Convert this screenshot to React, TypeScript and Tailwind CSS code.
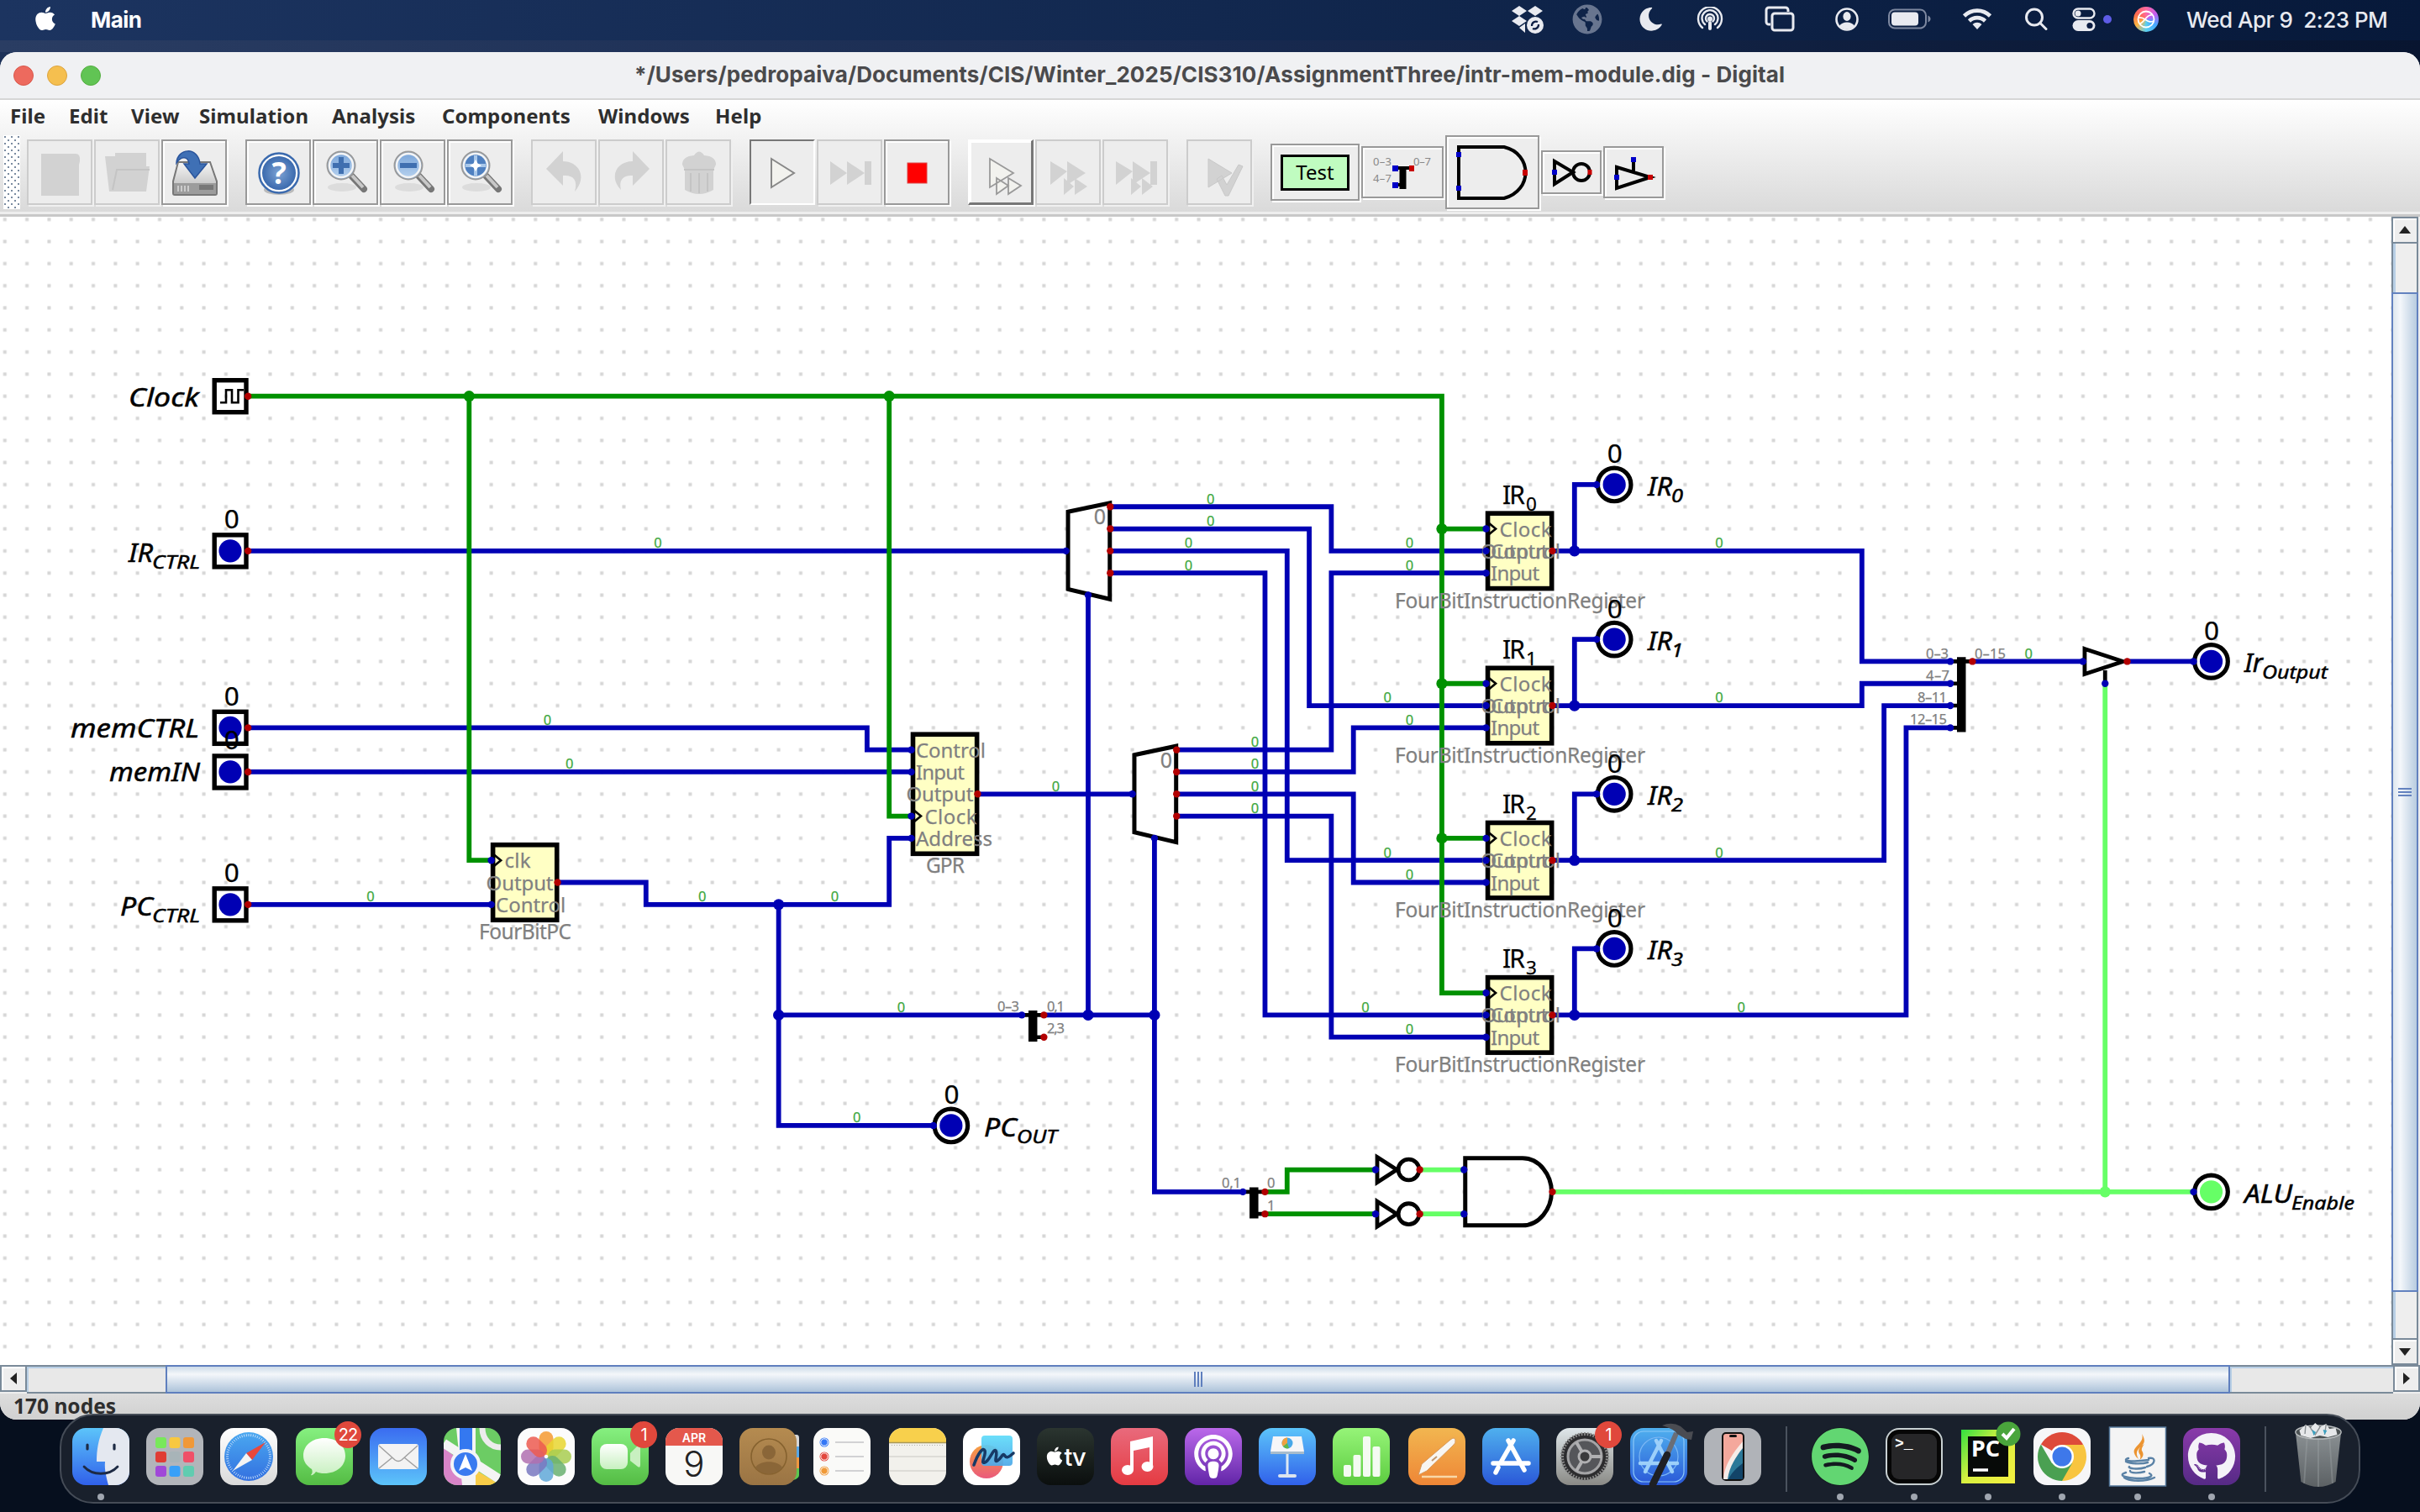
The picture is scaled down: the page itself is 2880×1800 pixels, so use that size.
import React from 'react';
import { FaApple, FaGithub, FaSpotify, FaMoon, FaGlobeAmericas, FaPodcast } from 'react-icons/fa';

/* ------------------------------------------------------------------ */
/* Circuit geometry: positions are grid cells, origin = clock out pin  */
/* ------------------------------------------------------------------ */
const G = 26.31;
const X = (n: number) => 295.2 + n * G;
const Y = (m: number) => 471.7 - 258 + m * G;

const BLUE = '#0000b4';
const GREEN = '#009100';
const LIGHT = '#66ff66';
const RED = '#b20000';

type Pts = number[][];
const path = (p: Pts) => p.map(([a, b], i) => `${i ? 'L' : 'M'}${X(a)} ${Y(b)}`).join('');

const blueWires: Pts[] = [
  [[0, 7], [37, 7]],
  [[0, 15], [28, 15], [28, 16], [30, 16]],
  [[0, 17], [30, 17]],
  [[33, 18], [40, 18]],
  [[30, 20], [29, 20], [29, 23], [18, 23], [18, 22], [14, 22]],
  [[0, 23], [11, 23]],
  [[24, 23], [24, 33], [31, 33]],
  [[24, 28], [35, 28]],
  [[36, 28], [41, 28]],
  [[38, 9], [38, 28]],
  [[41, 20], [41, 36], [45, 36]],
  [[39, 5], [49, 5], [49, 7], [56, 7]],
  [[39, 6], [48, 6], [48, 14], [56, 14]],
  [[39, 7], [47, 7], [47, 21], [56, 21]],
  [[39, 8], [46, 8], [46, 28], [56, 28]],
  [[42, 16], [49, 16], [49, 8], [56, 8]],
  [[42, 17], [50, 17], [50, 15], [56, 15]],
  [[42, 18], [50, 18], [50, 22], [56, 22]],
  [[42, 19], [49, 19], [49, 29], [56, 29]],
  [[59, 7], [73, 7], [73, 12], [77, 12]],
  [[59, 14], [73, 14], [73, 13], [77, 13]],
  [[59, 21], [74, 21], [74, 14], [77, 14]],
  [[59, 28], [75, 28], [75, 15], [77, 15]],
  [[60, 7], [60, 4], [61, 4]],
  [[60, 14], [60, 11], [61, 11]],
  [[60, 21], [60, 18], [61, 18]],
  [[60, 28], [60, 25], [61, 25]],
  [[78, 12], [83, 12]],
  [[85, 12], [88, 12]],
];
const greenWires: Pts[] = [
  [[0, 0], [54, 0], [54, 27], [56, 27]],
  [[10, 0], [10, 21], [11, 21]],
  [[29, 0], [29, 19], [30, 19]],
  [[54, 6], [56, 6]],
  [[54, 13], [56, 13]],
  [[54, 20], [56, 20]],
  [[46, 36], [47, 36], [47, 35], [51, 35]],
  [[46, 37], [51, 37]],
];
const lightWires: Pts[] = [
  [[53, 35], [55, 35]],
  [[53, 37], [55, 37]],
  [[59, 36], [88, 36]],
  [[84, 36], [84, 13]],
];
const wireValues: Pts = [
  [18.5, 7], [13.5, 15], [14.5, 17], [5.5, 23], [20.5, 23], [26.5, 23], [29.5, 28], [27.5, 33], [36.5, 18],
  [43.5, 5], [43.5, 6], [42.5, 7], [42.5, 8], [45.5, 16], [45.5, 17], [45.5, 18], [45.5, 19],
  [52.5, 7], [52.5, 8], [51.5, 14], [52.5, 15], [51.5, 21], [52.5, 22], [50.5, 28], [52.5, 29],
  [66.5, 7], [66.5, 14], [66.5, 21], [67.5, 28], [80.5, 12],
];
const blueJunctions: Pts = [[24, 23], [24, 28], [38, 28], [41, 28], [60, 7], [60, 14], [60, 21], [60, 28]];
const greenJunctions: Pts = [[10, 0], [29, 0], [54, 6], [54, 13], [54, 20]];

function T({ x, y, s, w, anchor = 'start', italic = false, fill = '#000', children }: {
  x: number; y: number; s: number; w?: number; anchor?: 'start' | 'middle' | 'end'; italic?: boolean; fill?: string; children: React.ReactNode;
}) {
  return (
    <text
      x={x} y={y} fontSize={s} textLength={w} lengthAdjust={italic ? 'spacingAndGlyphs' : 'spacing'} textAnchor={anchor}
      fontStyle={italic ? 'italic' : 'normal'} fill={fill} stroke={fill} strokeWidth={italic ? 0.5 : 0.25}
    >
      {children}
    </text>
  );
}

const Pin = ({ n, m, c = BLUE, r = 4.2 }: { n: number; m: number; c?: string; r?: number }) => (
  <circle cx={X(n)} cy={Y(m)} r={r} fill={c} />
);

function Sub({ x, y, main, sub, w1, x2, w2, italic = true }: {
  x: number; y: number; main: string; sub: string; w1: number; x2: number; w2: number; italic?: boolean;
}) {
  return (
    <>
      <T x={x} y={y} s={30} w={w1} italic={italic}>{main}</T>
      <T x={x2} y={y + 8} s={22.5} w={w2} italic={italic}>{sub}</T>
    </>
  );
}

function InputPort({ m, clock = false }: { m: number; clock?: boolean }) {
  const y = Y(m);
  return (
    <>
      <rect x={255.2} y={y - 19} width={37.8} height={38} fill="none" stroke="#000" strokeWidth={5.4} />
      {clock ? (
        <path d={`M262 ${y + 7.5}H269V${y - 7.5}H276V${y + 7.5}H283.5V${y - 7.5}H290`} fill="none" stroke="#000" strokeWidth={2.6} />
      ) : (
        <>
          <circle cx={274} cy={y} r={13.6} fill={BLUE} />
          <T x={275.8} y={y - 26.5} s={31.5} anchor="middle">0</T>
        </>
      )}
      <Pin n={0} m={m} c={RED} />
    </>
  );
}

function OutputPort({ n, m, on = false }: { n: number; m: number; on?: boolean }) {
  const x = X(n + 0.8);
  return (
    <>
      <circle cx={x} cy={Y(m)} r={19.8} fill="#fff" stroke="#000" strokeWidth={5.2} />
      <circle cx={x} cy={Y(m)} r={13.6} fill={on ? LIGHT : BLUE} />
      {!on && <T x={x + 0.6} y={Y(m) - 25.5} s={31.5} anchor="middle">0</T>}
      <Pin n={n} m={m} />
    </>
  );
}

type Row = { t: string; m: number; kind: 'in' | 'out' | 'clk'; w: number };
function Block({ n, rows, name, nameW }: { n: number; rows: Row[]; name: string; nameW: number }) {
  const m0 = Math.min(...rows.map((r) => r.m));
  const m1 = Math.max(...rows.map((r) => r.m));
  return (
    <>
      <rect x={X(n) + 2} y={Y(m0 - 0.7)} width={3 * G - 2.8} height={Y(m1 + 0.7) - Y(m0 - 0.7)} fill="#ffffc4" stroke="#000" strokeWidth={5.6} />
      <T x={X(n + 1.5) + 1} y={Y(m1) + 41.5} s={24.5} w={nameW} anchor="middle" fill="#808080">{name}</T>
      {rows.map((r) => {
        const y = Y(r.m) + 9;
        if (r.kind === 'out')
          return (
            <g key={r.t}>
              <T x={X(n + 3) - 5} y={y} s={24} w={r.w} anchor="end" fill="#808080">{r.t}</T>
            </g>
          );
        return (
          <g key={r.t}>
            {r.kind === 'clk' && <path d={`M${X(n) + 3} ${Y(r.m) - 7}l8.5 7l-8.5 7`} fill="none" stroke="#000" strokeWidth={2.6} />}
            <T x={X(n) + (r.kind === 'clk' ? 16 : 5.5)} y={y} s={24} w={r.w} fill="#808080">{r.t}</T>
          </g>
        );
      })}
      {rows.map((r) => (
        <Pin key={r.t + 'p'} n={r.kind === 'out' ? n + 3 : n} m={r.m} c={r.kind === 'out' ? RED : BLUE} />
      ))}
    </>
  );
}

function Demux({ n, m }: { n: number; m: number }) {
  return (
    <>
      <path
        d={`M${X(n + 0.09)} ${Y(m + 0.23)}L${X(n + 1.98)} ${Y(m - 0.17)}V${Y(m + 4.18)}L${X(n + 0.09)} ${Y(m + 3.73)}Z`}
        fill="none" stroke="#000" strokeWidth={5}
      />
      <T x={X(n + 1.5) + 0.8} y={Y(m) + 21} s={25} anchor="middle" fill="#808080">0</T>
      {[0, 1, 2, 3].map((i) => <Pin key={i} n={n + 2} m={m + i} c={RED} />)}
      <Pin n={n} m={m + 2} />
      <Pin n={n + 1} m={m + 4} />
    </>
  );
}

function Inverter({ m }: { m: number }) {
  const y = Y(m);
  return (
    <>
      <path d={`M${X(51) + 2} ${y - 15}L${X(52) - 1} ${y}L${X(51) + 2} ${y + 15}Z`} fill="none" stroke="#000" strokeWidth={4.8} />
      <circle cx={X(52.5)} cy={y} r={12.4} fill="none" stroke="#000" strokeWidth={4.8} />
      <Pin n={51} m={m} />
      <Pin n={53} m={m} c={RED} />
    </>
  );
}

function Circuit() {
  const S = (x: number, y: number, w: number | undefined, t: string, end = false) => (
    <T x={x} y={y - 258} s={16.5} w={w} anchor={end ? 'end' : 'start'} fill="#808080">{t}</T>
  );
  return (
    <svg className="block h-full w-full" viewBox="0 0 2846 1367" preserveAspectRatio="xMinYMin slice" style={{ fontFamily: '"Noto Sans", "Open Sans", sans-serif' }}>
      <defs>
        <pattern id="dots" x={X(0) - G / 2} y={Y(0) - G / 2} width={G} height={G} patternUnits="userSpaceOnUse">
          <rect x={G / 2 - 2} y={G / 2 - 2} width={4} height={4} fill="#d6d6d6" />
        </pattern>
      </defs>
      <rect width={2846} height={1358} fill="url(#dots)" />
      <g fill="none" strokeWidth={5.8} strokeLinecap="square">
        {blueWires.map((w, i) => <path key={i} d={path(w)} stroke={BLUE} />)}
        {greenWires.map((w, i) => <path key={i} d={path(w)} stroke={GREEN} />)}
        {lightWires.map((w, i) => <path key={i} d={path(w)} stroke={LIGHT} />)}
      </g>
      {blueJunctions.map(([a, b]) => <Pin key={`${a}-${b}`} n={a} m={b} r={6.6} />)}
      {greenJunctions.map(([a, b]) => <Pin key={`${a}-${b}`} n={a} m={b} c={GREEN} r={6.6} />)}
      <Pin n={84} m={36} c={LIGHT} r={6.6} />
      {wireValues.map(([a, b]) => (
        <T key={`${a}-${b}`} x={X(a + 0.04)} y={Y(b) - 3.6} s={16.5} anchor="middle" fill="#40a840">0</T>
      ))}

      <T x={153} y={Y(0) + 12} s={30} w={84} italic>Clock</T>
      <Sub x={153} y={Y(7) + 12.8} main="IR" w1={29} sub="CTRL" x2={181} w2={57} />
      <T x={84} y={Y(15) + 11.5} s={30} w={153} italic>memCTRL</T>
      <T x={130} y={Y(17) + 11.5} s={30} w={108} italic>memIN</T>
      <Sub x={143} y={Y(23) + 12.8} main="PC" w1={39} sub="CTRL" x2={181} w2={57} />
      <InputPort m={0} clock />
      <InputPort m={7} />
      <InputPort m={15} />
      <InputPort m={17} />
      <InputPort m={23} />

      <Block n={11} name="FourBitPC" nameW={110} rows={[
        { t: 'clk', m: 21, kind: 'clk', w: 31 },
        { t: 'Output', m: 22, kind: 'out', w: 80 },
        { t: 'Control', m: 23, kind: 'in', w: 83 },
      ]} />
      <Block n={30} name="GPR" nameW={46} rows={[
        { t: 'Control', m: 16, kind: 'in', w: 83 },
        { t: 'Input', m: 17, kind: 'in', w: 58 },
        { t: 'Output', m: 18, kind: 'out', w: 80 },
        { t: 'Clock', m: 19, kind: 'clk', w: 62 },
        { t: 'Address', m: 20, kind: 'in', w: 91 },
      ]} />
      {[0, 1, 2, 3].map((i) => (
        <g key={i}>
          <Sub x={1788} y={Y(6 + 7 * i) - 30} main="IR" w1={27} sub={String(i)} x2={1816} w2={13} italic={false} />
          <Block n={56} name="FourBitInstructionRegister" nameW={298} rows={[
            { t: 'Clock', m: 6 + 7 * i, kind: 'clk', w: 62 },
            { t: 'Control', m: 7 + 7 * i, kind: 'in', w: 83 },
            { t: 'Output', m: 7 + 7 * i, kind: 'out', w: 80 },
            { t: 'Input', m: 8 + 7 * i, kind: 'in', w: 58 },
          ]} />
          <OutputPort n={61} m={4 + 7 * i} />
          <Sub x={1961} y={Y(4 + 7 * i) + 13} main="IR" w1={29} sub={String(i)} x2={1989} w2={14} />
        </g>
      ))}

      <Demux n={37} m={5} />
      <Demux n={40} m={16} />

      <OutputPort n={31} m={33} />
      <Sub x={1171} y={Y(33) + 13} main="PC" w1={39} sub="OUT" x2={1210} w2={48} />
      <OutputPort n={88} m={12} />
      <Sub x={2671} y={Y(12) + 13} main="Ir" w1={22} sub="Output" x2={2692} w2={78} />
      <OutputPort n={88} m={36} on />
      <Sub x={2671} y={Y(36) + 13} main="ALU" w1={57} sub="Enable" x2={2727} w2={75} />

      <g stroke="#000" strokeWidth={4.6}>
        <path d={`M${X(35)} ${Y(28)}H${X(36)}M${X(35.5)} ${Y(29)}H${X(36)}`} />
        <path d={`M${X(45)} ${Y(36)}H${X(46)}M${X(45.5)} ${Y(37)}H${X(46)}`} />
        <path d={`M${X(77)} ${Y(12)}H${X(78)}M${X(77)} ${Y(13)}H${X(77.5)}M${X(77)} ${Y(14)}H${X(77.5)}M${X(77)} ${Y(15)}H${X(77.5)}`} />
        <path strokeWidth={10.5} d={`M${X(35.5)} ${Y(27.8)}V${Y(29.2)}M${X(45.5)} ${Y(35.8)}V${Y(37.2)}M${X(77.5)} ${Y(11.8)}V${Y(15.2)}`} />
      </g>
      {S(1213, 1203.5, 26, '0–3', true)}
      {S(1246, 1203.5, 21, '0,1')}
      {S(1246, 1229.5, 21, '2,3')}
      {S(1477, 1414, 23, '0,1', true)}
      {S(1508, 1414, undefined, '0')}
      {S(1508, 1441, undefined, '1')}
      {S(2319, 784, 27, '0–3', true)}
      {S(2320, 810, 28, '4–7', true)}
      {S(2317, 836, 35, '8–11', true)}
      {S(2317, 862, 44, '12–15', true)}
      {S(2350, 784, 37, '0–15')}
      <Pin n={35} m={28} /><Pin n={36} m={28} c={RED} /><Pin n={36} m={29} c={RED} />
      <Pin n={45} m={36} /><Pin n={46} m={36} c={RED} /><Pin n={46} m={37} c={RED} />
      {[12, 13, 14, 15].map((m) => <Pin key={m} n={77} m={m} />)}
      <Pin n={78} m={12} c={RED} />

      <Inverter m={35} />
      <Inverter m={37} />
      <path d={`M${X(55) + 1.5} ${Y(36) - 40}H${X(57.65)}C${X(57.65) + 20} ${Y(36) - 40} ${X(59) - 1} ${Y(36) - 20} ${X(59) - 1} ${Y(36)}S${X(57.65) + 20} ${Y(36) + 40} ${X(57.65)} ${Y(36) + 40}H${X(55) + 1.5}Z`} fill="none" stroke="#000" strokeWidth={5} />
      <Pin n={55} m={35} /><Pin n={55} m={37} /><Pin n={59} m={36} c={RED} />

      <path d={`M${X(83) + 2} ${Y(12) - 15}L${X(85) - 5} ${Y(12)}L${X(83) + 2} ${Y(12) + 15}ZM${X(84)} ${Y(12.4)}V${Y(13)}`} fill="none" stroke="#000" strokeWidth={4.8} />
      <Pin n={83} m={12} /><Pin n={85} m={12} c={RED} /><Pin n={84} m={13} />
    </svg>
  );
}

/* ------------------------------ menu bar ------------------------------ */
const ico = 'ml-[31px] flex h-10 w-10 items-center justify-center shrink-0';
function MenuBar() {
  const st = { fill: 'none', stroke: '#e8eaf0', strokeWidth: 3 } as const;
  return (
    <header className="flex h-12 items-center bg-linear-to-r from-[#1c3460] via-[#12284f] to-[#07193a] pb-[2px] pl-[38px] text-[#e8eaf0]" style={{ fontFamily: 'Inter, sans-serif' }}>
      <FaApple className="-mt-[3px] h-8 w-8 text-white" />
      <span className="ml-[38px] text-[26px] font-bold tracking-[-0.5px] text-white">Main</span>
      <div className="ml-auto flex items-center">
        <div className={ico}>
          <svg width="38" height="36" viewBox="0 0 38 36" fill="#e8eaf0">
            <path d="M9 2l9 6-9 6-9-6zM28 2l9 6-9 6-9-6zM9 14l9 6-9 6-9-6zM9 28l7-5v11z" />
            <circle cx="28" cy="25" r="10" />
            <path d="M24 26a5 5 0 0 1 7-5M32 24a5 5 0 0 1-7 5" fill="none" stroke="#0b1c42" strokeWidth="2.2" />
          </svg>
        </div>
        <div className={ico}><FaGlobeAmericas className="h-9 w-9 text-[#68758f]" /></div>
        <div className="ml-[35px] flex h-10 w-10 items-center justify-center"><FaMoon className="h-[28px] w-[28px] rotate-[-10deg] text-[#e8eaf0]" /></div>
        <div className={ico}>
          <svg width="32" height="30" viewBox="0 0 32 30" {...st} strokeWidth={2.4} strokeLinecap="round">
            <path d="M7 25A14 14 0 1 1 25 25M10 21A9.500 9.500 0 1 1 22 21M12.500 17.500A5 5 0 1 1 19.500 17.500" />
            <circle cx="16" cy="14.500" r="1.800" fill="#e8eaf0" /><path d="M16 19v7" strokeWidth={4} />
          </svg>
        </div>
        <div className="ml-[43px] flex h-10 w-10 items-center justify-center">
          <svg width="36" height="32" viewBox="0 0 36 32" {...st}>
            <path d="M7 22H5a3 3 0 0 1-3-3V5a3 3 0 0 1 3-3h20a3 3 0 0 1 3 3v2" /><rect x="9" y="9" width="25" height="20" rx="3" />
          </svg>
        </div>
        <div className="ml-10 flex h-10 w-10 items-center justify-center">
          <svg width="30" height="30" viewBox="0 0 30 30" {...st}>
            <circle cx="15" cy="15" r="12.500" strokeWidth={2.6} /><ellipse cx="15" cy="11.500" rx="4.600" ry="5.400" fill="#e8eaf0" stroke="none" /><path d="M6 23c3-6 15-6 18 0-5 5-13 5-18 0z" fill="#e8eaf0" stroke="none" />
          </svg>
        </div>
        <div className="ml-[35px] flex h-10 w-10 items-center justify-center">
          <svg className="shrink-0" width="52" height="26" viewBox="0 0 52 26">
            <rect x="1" y="1.500" width="44" height="22" rx="7" fill="none" stroke="#7d88a0" strokeWidth="2" /><rect x="4" y="4.500" width="32" height="16" rx="4" fill="#e8eaf0" /><path d="M47.500 8.500c4 1.500 4 6.500 0 8z" fill="#7d88a0" />
          </svg>
        </div>
        <div className="ml-10 flex h-10 w-10 items-center justify-center">
          <svg width="36" height="28" viewBox="0 0 36 28" {...st} strokeWidth={4.6}>
            <path d="M2.500 10a22 22 0 0 1 31 0M8.500 16a13.500 13.500 0 0 1 19 0" /><path d="M18 26l-5.500-6a8 8 0 0 1 11 0z" fill="#e8eaf0" stroke="none" />
          </svg>
        </div>
        <div className="ml-[30px] flex h-10 w-10 items-center justify-center">
          <svg width="28" height="28" viewBox="0 0 28 28" {...st} strokeLinecap="round"><circle cx="12" cy="11.500" r="9.500" /><path d="M19 18.500l7 7" /></svg>
        </div>
        <div className="ml-[17px] flex h-10 w-10 items-center justify-center">
          <svg width="28" height="28" viewBox="0 0 28 28">
            <rect x="1.500" y="1.500" width="25" height="11" rx="5.500" fill="none" stroke="#e8eaf0" strokeWidth="2.400" /><circle cx="7" cy="7" r="3.500" fill="#e8eaf0" />
            <rect x="0.500" y="15" width="27" height="13" rx="6.500" fill="#e8eaf0" /><circle cx="21" cy="21.500" r="3.600" fill="#0b1c42" />
          </svg>
        </div>
        <span className="ml-[3px] h-[10px] w-[10px] rounded-full bg-[#5e5ce6]" />
        <div className="ml-[21px] flex h-10 w-10 items-center justify-center">
          <div className="flex h-[30px] w-[30px] items-center justify-center rounded-full bg-[conic-gradient(#ff6aa0,#c45cf0,#46a8ff,#5ad0f0,#ffb340,#ff6a50,#ff6aa0)]">
            <svg width="22" height="22" viewBox="0 0 22 22" fill="none" stroke="#fff" strokeWidth="1.800"><circle cx="11" cy="11" r="9.500" /><path d="M2 9c8-2 10 8 18 4M4 16C8 16 12 4 18 6" /></svg>
          </div>
        </div>
        <span className="ml-[28px] w-[278px] whitespace-pre text-[26px] font-medium tracking-[-0.5px]">Wed Apr 9  2:23 PM</span>
      </div>
    </header>
  );
}

/* ------------------------------ toolbar ------------------------------ */
function Btn({ children, off = false, down = false, cls = 'h-[78px] w-[78px]' }: { children?: React.ReactNode; off?: boolean; down?: boolean; cls?: string }) {
  const look = down
    ? 'border-2 border-t-[#777] border-l-[#777] border-r-white border-b-white'
    : off
      ? 'border-2 border-[#cccccc] shadow-[2px_2px_0_#f0f0f0]'
      : 'border-2 border-[#999] shadow-[2px_2px_0_#fff,inset_2px_2px_0_#fff]';
  return <div className={`mr-[2px] flex shrink-0 items-center justify-center bg-[#ededed] ${cls} ${look}`}>{children}</div>;
}
const I = ({ children }: { children: React.ReactNode }) => <svg className="shrink-0" width="78" height="78" viewBox="0 0 78 78">{children}</svg>;
const Sp = () => <div className="w-5 shrink-0" />;
const Lens = ({ children }: { children: React.ReactNode }) => (
  <I>
    <ellipse cx="35" cy="57" rx="17" ry="5" fill="#dcdcdc" />
    <path d="M46 43L61 59" stroke="#777" strokeWidth="8" strokeLinecap="round" /><path d="M47 43L60 57" stroke="#c8c8c8" strokeWidth="4" />
    <circle cx="34" cy="31" r="16.500" fill="#8fb4e0" stroke="#9a9a9a" strokeWidth="2" /><circle cx="34" cy="31" r="14" fill="url(#lens)" stroke="#f4f4f4" strokeWidth="2.500" />
    {children}
  </I>
);

function Toolbar() {
  const g = '#d2d2d2';
  return (
    <div className="flex h-[92px] items-center pb-[2px] pl-1">
      <svg width="0" height="0" className="absolute">
        <defs>
          <linearGradient id="lens" x1="0" y1="0" x2="0" y2="1"><stop offset="0" stopColor="#7ba6da" /><stop offset="1" stopColor="#b5d0ee" /></linearGradient>
          <linearGradient id="drv" x1="0" y1="0" x2="0" y2="1"><stop offset="0" stopColor="#f6f6f6" /><stop offset="1" stopColor="#b4b4b4" /></linearGradient>
          <radialGradient id="hlp"><stop offset="0" stopColor="#7da3d4" /><stop offset="1" stopColor="#3b6aae" /></radialGradient>
        </defs>
      </svg>
      <div className="mr-2 h-[88px] w-5 shrink-0 bg-[radial-gradient(circle_at_2px_2px,#7a8ba0_1.3px,transparent_1.5px),radial-gradient(circle_at_6px_6px,#7a8ba0_1.3px,transparent_1.5px)] bg-[length:8px_8px] bg-white" />
      <Btn off><I><path d="M17 17H58Q64 17 63 26L62 30V67H17Z" fill={g} /></I></Btn>
      <Btn off><I><path d="M13 20H25V16H62V32H66L62 62H18Z" fill={g} /><path d="M22 60L27 36H66" fill="none" stroke="#c4c4c4" strokeWidth="2" /></I></Btn>
      <Btn><I>
        <path d="M20 27H58L66 50V64Q66 66 64 66H16Q14 66 14 64V50Z" fill="url(#drv)" stroke="#777" strokeWidth="2" /><path d="M15 52H65V65H15Z" fill="#9c9c9c" /><path d="M20 55v7M24 55v7M28 55v7M32 55v7" stroke="#ccc" strokeWidth="2" /><path d="M45 57H62" stroke="#777" strokeWidth="6" />
        <path d="M18 28C19 10 44 8 46 29H54L40 46L27 29H33C32 20 24 19 18 28Z" fill="#3f70b5" stroke="#2a549b" strokeWidth="1.500" />
      </I></Btn>
      <Sp />
      <Btn><I><ellipse cx="40" cy="60" rx="18" ry="6" fill="#bbb" /><circle cx="40" cy="40" r="23.500" fill="#fff" stroke="#3b6aae" strokeWidth="2.500" /><circle cx="40" cy="40" r="20" fill="url(#hlp)" /><text x="40" y="53" textAnchor="middle" fontSize="36" fontWeight="700" fill="#fff" fontFamily="Noto Sans, sans-serif">?</text></I></Btn>
      <Btn><Lens><path d="M34 21V41M24 31H44" stroke="#3f6fb0" strokeWidth="6" /></Lens></Btn>
      <Btn><Lens><path d="M24 31H44" stroke="#3f6fb0" strokeWidth="6" /></Lens></Btn>
      <Btn><Lens><circle cx="34" cy="31" r="12.500" fill="#4f80c0" /><path d="M34 19V43M22 31H46" stroke="#a9c8ea" strokeWidth="4" /><path d="M34 24l2.500 4.500 4.500 2.500-4.500 2.500-2.500 4.500-2.500-4.500-4.500-2.500 4.500-2.500z" fill="#fff" /></Lens></Btn>
      <Sp />
      <Btn off><I><path d="M18 35L38 14V26C56 26 68 44 52 62C56 48 50 42 38 43V55Z" fill={g} /></I></Btn>
      <Btn off><I><path d="M61 35L41 14V26C22 26 12 44 27 60C24 48 30 42 41 43V55Z" fill={g} /></I></Btn>
      <Btn off><I><path d="M20 30Q20 20 34 19Q40 10 46 19Q60 20 60 30L57 36V60Q40 70 23 60V36Z" fill={g} /><path d="M22 36H58M30 40V62M40 40V64M50 40V62" stroke="#c4c4c4" strokeWidth="2" /></I></Btn>
      <Sp />
      <Btn down><I><path d="M26 23L53 40L26 57Z" fill="#f2f2ee" stroke="#888" strokeWidth="2" /></I></Btn>
      <Btn off><I><path d="M16 26L36 40L16 54ZM36 26L57 40L36 54ZM57 26H65V54H57Z" fill={g} /></I></Btn>
      <Btn><I><rect x="28" y="28" width="23" height="24" fill="#f00" stroke="#d44" strokeWidth="1" /></I></Btn>
      <Sp />
      <Btn cls="h-[78px] w-[78px] border-r-[3px]! border-b-[3px]! border-t-white! border-l-white! border-r-[#777]! border-b-[#777]!"><I><path d="M26 23L54 40L26 57ZM34 46L48 55L34 65ZM48 46L63 55L48 65Z" fill="#f2f2ee" stroke="#999" strokeWidth="1.800" /></I></Btn>
      <Btn off><I><path d="M18 26L38 38L18 54ZM38 26L60 40L38 54ZM34 46L46 56L34 66ZM47 46L62 56L47 66Z" fill={g} /></I></Btn>
      <Btn off><I><path d="M16 26L36 38L16 54ZM36 26L57 40L36 54ZM57 26H65V54H57ZM34 46L46 56L34 66ZM47 46L60 56L47 66Z" fill={g} /></I></Btn>
      <Sp />
      <Btn off><I><path d="M26 23L54 40L26 57ZM36 47L42 43L48 54L62 30L67 32L50 67H46Z" fill={g} stroke="#c8c8c8" strokeWidth="1" /></I></Btn>
      <Sp />
      <Btn cls="h-[68px] w-[106px]">
        <div className="flex h-[43px] w-[82px] items-center justify-center border-[3px] border-black bg-[#c0fcc0] text-[24px] text-black">Test</div>
      </Btn>
      <Btn cls="h-[62px] w-[98px]">
        <svg width="94" height="58" viewBox="0 0 94 58" fontSize="13" fill="#888" fontFamily="Noto Sans, sans-serif">
          <text x="12" y="21" textLength="22">0–3</text><text x="60" y="21" textLength="21">0–7</text><text x="12" y="41" textLength="22">4–7</text>
          <path d="M39 24H57M39 44H47" stroke="#000" strokeWidth="4" /><path d="M47.500 22V49" stroke="#000" strokeWidth="8" />
          <path d="M35 21h7v7h-7zM35 41h7v7h-7z" fill="#0000c8" /><path d="M55 21h6v7h-6z" fill="#c80000" />
        </svg>
      </Btn>
      <Btn cls="h-[88px] w-[112px]">
        <svg width="108" height="84" viewBox="0 0 108 84" fill="none" stroke="#000" strokeWidth="4">
          <path d="M14 12H68C102 20 102 64 68 73H14Z" /><path d="M14 18v6M14 58v6" stroke="#0000c8" strokeWidth="6" /><path d="M93 39v7" stroke="#c80000" strokeWidth="6" />
        </svg>
      </Btn>
      <Btn cls="h-[52px] w-[72px]">
        <svg width="68" height="48" viewBox="0 0 68 48" fill="none" stroke="#000" strokeWidth="4">
          <path d="M14 11L36 24L14 38Z" /><circle cx="46" cy="24" r="10" /><path d="M14 21v6" stroke="#0000c8" strokeWidth="6" /><path d="M56 21v6" stroke="#c80000" strokeWidth="5" />
        </svg>
      </Btn>
      <Btn cls="h-[62px] w-[72px]">
        <svg width="68" height="58" viewBox="0 0 68 58" fill="none" stroke="#000" strokeWidth="4">
          <path d="M14 23L54 35L14 48ZM34 15V28" /><path d="M14 32v6M34 11v6" stroke="#0000c8" strokeWidth="6" /><path d="M54 32v6" stroke="#c80000" strokeWidth="6" />
        </svg>
      </Btn>
    </div>
  );
}

/* ------------------------------ scrollbars ------------------------------ */
const Arrow = ({ d }: { d: string }) => <svg width="16" height="16" viewBox="0 0 16 16"><path d={d} fill="#222" /></svg>;
const sbBtn = 'flex h-[32px] w-[32px] shrink-0 items-center justify-center border-2 border-[#7a8a99] bg-[#eeeeee] shadow-[inset_2px_2px_0_#fff]';

/* ------------------------------ dock ------------------------------ */
type DockItem = { k: string; el: React.ReactNode; running?: boolean; gap?: boolean; badge?: string };
const V = ({ children }: { children: React.ReactNode }) => <svg className="h-[68px] w-[68px] overflow-visible" viewBox="0 0 68 68">{children}</svg>;
const Sq = ({ f }: { f: string }) => <rect width="68" height="68" rx="16" fill={f} />;
const grads: [string, string, string][] = [
  ['gBlue', '#3a6cf0', '#5cc4fa'], ['gBlue2', '#5cc4fa', '#3060ea'], ['gGreen', '#86f080', '#54bc44'],
  ['gRed', '#e96a7c', '#e53b42'], ['gOr', '#f2b650', '#ee8636'], ['gGrey', '#dfe7ea', '#8a8a86'], ['gWhite', '#ffffff', '#dadada'],
  ['gCont', '#b58b50', '#9a7444'], ['gNum', '#96f478', '#5ccc40'], ['gStore', '#4fb0ee', '#2a58d8'], ['gSaf', '#4aa8f0', '#3370e0'],
  ['gTrash', '#8b9194', '#5c6164'], ['gFree', '#f6a040', '#ea5a7c'], ['gSky', '#60dcfa', '#4ea8e8'], ['gBub', '#ffffff', '#c8f0c0'],
];
const tick = (n: number, r1: number, r2: number) =>
  Array.from({ length: n }, (_, i) => {
    const a = (i / n) * Math.PI * 2;
    return `M${34 + r1 * Math.cos(a)} ${34 + r1 * Math.sin(a)}L${34 + r2 * Math.cos(a)} ${34 + r2 * Math.sin(a)}`;
  }).join('');

const left: DockItem[] = [
  { k: 'finder', running: true, el: <V><clipPath id="r"><rect width="68" height="68" rx="16" /></clipPath><g clipPath="url(#r)"><rect width="68" height="68" fill="url(#gBlue2)" /><path d="M37 0C31 14 29 26 29 40H39C38 50 41 60 43 68H68V0Z" fill="#e4e8f0" /></g><path d="M18 20v5M50 20v5" stroke="#1d2a44" strokeWidth="3.200" strokeLinecap="round" /><path d="M14 46C24 57 44 57 54 46" fill="none" stroke="#1d2a44" strokeWidth="2.800" strokeLinecap="round" /></V> },
  { k: 'launchpad', el: <V><Sq f="#b2b5ba" />{['#78e85a', '#f8c840', '#f09838', '#e03c34', '#a8b4b8', '#f05068', '#a048d8', '#38a0f8', '#60ccb0'].map((c, i) => <rect key={c} x={11 + (i % 3) * 16.500} y={11 + Math.floor(i / 3) * 17} width="13" height="13" rx="3" fill={c} />)}</V> },
  { k: 'safari', el: <V><Sq f="url(#gWhite)" /><circle cx="34" cy="34" r="29" fill="url(#gSaf)" /><path d={tick(60, 24, 27)} stroke="#cfe4fa" strokeWidth="0.900" /><path d="M54 17L38 38L31 30Z" fill="#e8483c" /><path d="M15 51L31 30L38 38Z" fill="#f4f4f4" /></V> },
  { k: 'messages', gap: true, badge: '22', el: <V><Sq f="url(#gGreen)" /><path d="M34 12C49 12 59 21 59 33S49 54 34 54C30 54 27 53.500 24 52C22 55 19 57 18 56C20 54 20 51 19 49C13 45 9 40 9 33C9 21 19 12 34 12Z" fill="url(#gBub)" /></V> },
  { k: 'mail', el: <V><Sq f="url(#gBlue)" /><rect x="10" y="19" width="48" height="30" rx="3" fill="#f3f3f3" /><path d="M11 21L30 38Q34 41 38 38L57 21M11 48L27 35M57 48L41 35" fill="none" stroke="#a0a0a0" strokeWidth="1.500" /></V> },
  { k: 'maps', el: <V><clipPath id="r2"><rect width="68" height="68" rx="16" /></clipPath><g clipPath="url(#r2)"><rect width="68" height="68" fill="#6ccc64" /><path d="M0 24L30 46V68H0Z" fill="#d884c8" /><path d="M38 68V50L68 68Z" fill="#f8cc48" /><path d="M0 18L68 62" stroke="#f4f4f4" strokeWidth="11" /><path d="M15 0H38V68H22Z" fill="#f4f4f4" /><path d="M19 0H34V50H19Z" fill="#3478f0" /><path d="M46 0C46 14 56 23 68 23" fill="none" stroke="#ececec" strokeWidth="7" /></g><circle cx="26" cy="43" r="16" fill="#3a7af0" stroke="#f4f4f8" strokeWidth="4" /><path d="M26 31L34 51L26 47L18 51Z" fill="#fff" /></V> },
  { k: 'photos', el: <V><Sq f="#fcfcfc" />{['#f49a30', '#e8d630', '#a8cc50', '#68b070', '#60a8d8', '#7878c0', '#b070b0', '#ec5a50'].map((c, i) => <rect key={c} x="25.500" y="4" width="17" height="28" rx="8.500" fill={c} fillOpacity="0.850" transform={`rotate(${i * 45} 34 34)`} />)}</V> },
  { k: 'facetime', badge: '1', el: <V><Sq f="url(#gGreen)" /><rect x="10" y="19" width="33" height="30" rx="8" fill="url(#gBub)" /><path d="M46 30L55 21Q58 20 58 24V44Q58 48 55 46L46 39Z" fill="#c8f0c0" /></V> },
  { k: 'calendar', el: <V><Sq f="#f8f8f6" /><path d="M0 21V16A16 16 0 0 1 16 0H52A16 16 0 0 1 68 16V21Z" fill="#e4584c" /><text x="34" y="16.500" textAnchor="middle" fontSize="14" fontWeight="600" fill="#fff">APR</text><text x="34" y="58" textAnchor="middle" fontSize="42" fontWeight="300" fill="#222">9</text></V> },
  { k: 'contacts', el: <V><path d="M62 8h6q3 0 3 4v12h-9z" fill="#d8d8d8" /><path d="M64 22h7v13h-7z" fill="#58a8e8" /><path d="M64 35h7v13h-7z" fill="#f09840" /><path d="M64 48h7v8q0 4-7 6z" fill="#5cc850" /><Sq f="url(#gCont)" /><circle cx="35" cy="34" r="21" fill="none" stroke="#86622f" strokeWidth="1.600" /><ellipse cx="35" cy="29" rx="8" ry="8.500" fill="#8a6638" /><path d="M19 47C24 38 46 38 51 47C44 57 26 57 19 47Z" fill="#8a6638" /></V> },
  { k: 'reminders', el: <V><Sq f="#fafaf8" />{['#3478f6', '#e2463c', '#f09a38'].map((c, i) => <g key={c}><circle cx="13" cy={17 + i * 17} r="5.500" fill={c} /><circle cx="13" cy={17 + i * 17} r="4.200" fill="none" stroke="#fff" strokeWidth="1" /><path d={`M26 ${17 + i * 17}H60`} stroke="#c4c4c8" strokeWidth="1.600" /></g>)}</V> },
  { k: 'notes', gap: true, el: <V><Sq f="#f2f1ec" /><path d="M0 17V16A16 16 0 0 1 16 0H52A16 16 0 0 1 68 16V17Z" fill="#f8d04c" /><path d="M0 17.500H68" stroke="#a89858" strokeWidth="1.500" /><path d="M3 20.500H66" stroke="#b4b4b0" strokeWidth="1.200" strokeDasharray="1 2" /><path d="M0 34H68M0 51H68" stroke="#d6d5d0" strokeWidth="1.500" /></V> },
  { k: 'freeform', el: <V><Sq f="#fff" /><circle cx="28" cy="40" r="20" fill="url(#gFree)" /><rect x="22" y="9" width="37" height="36" rx="4" fill="url(#gSky)" fillOpacity="0.930" /><path d="M13 44C18 30 24 22 26 27S20 43 26 41S36 24 39 27S36 42 41 39S47 30 49 32S51 38 60 30" fill="none" stroke="#173a66" strokeWidth="3.600" strokeLinecap="round" /></V> },
  { k: 'tv', el: <div className="flex h-[68px] w-[68px] items-center justify-center rounded-[16px] bg-linear-to-b from-[#2b3530] to-[#0b0f0e] text-white"><FaApple className="-mt-[2px] h-[25px] w-[22px]" /><span className="text-[29px] leading-none font-medium tracking-[-1px]">tv</span></div> },
  { k: 'music', el: <V><Sq f="url(#gRed)" /><path d="M23 16L50 10V46H46V23L27 27V50H23Z" fill="#fff" /><ellipse cx="20" cy="50" rx="7" ry="6" fill="#fff" /><ellipse cx="43.500" cy="46" rx="7" ry="6" fill="#fff" /></V> },
  { k: 'podcasts', el: <div className="flex h-[68px] w-[68px] items-center justify-center rounded-[16px] bg-linear-to-b from-[#bb68ea] to-[#6324a8]"><FaPodcast className="h-[52px] w-[48px] text-white" /></div> },
  { k: 'keynote', el: <V><Sq f="url(#gBlue2)" /><path d="M34 30V56" stroke="#dce8f4" strokeWidth="3" /><rect x="23" y="55" width="22" height="4" rx="2" fill="#dce4ee" /><path d="M17 10H51L54 28V31H14V28Z" fill="#f6f6f8" /><path d="M14 28H54V31H14Z" fill="#a8bccc" /><circle cx="34" cy="18" r="6.500" fill="#48a8e8" /><path d="M34 18V11.500A6.500 6.500 0 0 0 29 22Z" fill="#f0a040" /><path d="M34 18L29 22A6.500 6.500 0 0 0 36 24Z" fill="#60b848" /></V> },
  { k: 'numbers', el: <V><Sq f="url(#gNum)" />{[[13, 44], [24.500, 32], [36, 10], [47.500, 22]].map(([x, y]) => <rect key={x} x={x} y={y} width="9" height={58 - y} rx="2" fill="#f4fbf2" />)}</V> },
  { k: 'pages', gap: true, el: <V><Sq f="url(#gOr)" /><path d="M12 56L16 43L50 14Q55 10 56 14T53 21L22 51Z" fill="#f8f6f2" stroke="#d89858" strokeWidth="1" /><path d="M28 39L34 34" stroke="#c09870" strokeWidth="2" /><path d="M16 58H58" stroke="#f8d8a8" strokeWidth="2.500" /></V> },
  { k: 'appstore', el: <V><Sq f="url(#gStore)" /><path d="M37 15L22 41M31 15L50 50M13 42H55M19 47L16 53" stroke="#fff" strokeWidth="5.500" strokeLinecap="round" /></V> },
  { k: 'settings', badge: '1', el: <V><Sq f="url(#gGrey)" /><circle cx="34" cy="34" r="28" fill="#2c2c2e" /><path d={tick(48, 25, 29)} stroke="#8a8a8a" strokeWidth="1.800" /><circle cx="34" cy="34" r="20" fill="#55565a" stroke="#a4a4a6" strokeWidth="3" /><path d="M34 34L54 34M34 34L24 17M34 34L24 51" stroke="#b0b0b2" strokeWidth="4" /><circle cx="34" cy="34" r="7" fill="#3a3a3c" stroke="#b0b0b2" strokeWidth="3" /></V> },
  { k: 'xcode', el: <V><Sq f="url(#gStore)" /><rect x="4" y="4" width="60" height="60" rx="12" fill="none" stroke="#8cc8f8" strokeWidth="1.200" /><circle cx="34" cy="34" r="23" fill="none" stroke="#7cb8f4" strokeWidth="1.200" /><path d="M37 15L18 52M31 15L50 52M12 42H56" fill="none" stroke="#9cd0fa" strokeWidth="4.500" strokeLinecap="round" /><path d="M55 6L44 32" stroke="#6a6e76" strokeWidth="6" /><path d="M44 32L27 67" stroke="#1e2024" strokeWidth="8.500" strokeLinecap="round" /><path d="M38 -3Q50 -8 60 -2L68 5L75 4L73 14L66 13L56 7Q52 1 38 -3Z" fill="#4a4c52" /></V> },
  { k: 'iphone', el: <V><Sq f="#b0b3b8" /><rect x="21" y="5" width="27" height="58" rx="5" fill="#111" /><rect x="23" y="7" width="23" height="54" rx="3" fill="#f4a89c" /><path d="M46 16C34 30 24 44 23 61H46Z" fill="#f6ece8" /><path d="M46 24C38 34 30 46 28 61H46Z" fill="#2c7898" /><path d="M46 42C38 48 32 54 29 61H46Z" fill="#124468" /><rect x="30" y="8" width="9" height="3" rx="1.500" fill="#111" /></V> },
];
const right: DockItem[] = [
  { k: 'spotify', running: true, el: <div className="flex h-[70px] w-[70px] items-center justify-center rounded-full bg-[#141a20]"><FaSpotify className="h-[70px] w-[70px] text-[#62d672]" /></div> },
  { k: 'terminal', running: true, el: <V><Sq f="#c8d0d2" /><rect x="2" y="2" width="64" height="64" rx="14" fill="#060606" /><rect x="7" y="7" width="54" height="54" rx="9" fill="#262628" /><text x="11" y="24" fontSize="18" fontWeight="700" fill="#fff" fontFamily="Liberation Mono, monospace">&gt;_</text></V> },
  { k: 'pycharm', running: true, el: <V><defs><linearGradient id="gPy" x1="0" y1="0" x2="1" y2="0.8"><stop offset="0" stopColor="#30e040" /><stop offset="0.5" stopColor="#d8f040" /><stop offset="1" stopColor="#f0f040" /></linearGradient></defs><path d="M2 2H66V66H2Z" fill="url(#gPy)" /><path d="M10 10H58V58H10Z" fill="#070a08" /><text x="14" y="34" fontSize="26" fontWeight="700" fill="#fff" fontFamily="Noto Sans, sans-serif" textLength="34" lengthAdjust="spacingAndGlyphs">PC</text><path d="M16 50H34" stroke="#fff" strokeWidth="3.500" /><circle cx="58" cy="7" r="14.500" fill="#4aa53c" /><path d="M51 7L56 12L65 1" fill="none" stroke="#fff" strokeWidth="4" /></V> },
  { k: 'chrome', running: true, el: <V><Sq f="#f6f6f8" /><path d="M34 34L8.900 19.500A29 29 0 0 1 59.100 19.500Z" fill="#de4a3a" /><path d="M34 34L59.100 19.500A29 29 0 0 1 34 63Z" fill="#f8c540" /><path d="M34 63A29 29 0 0 1 8.900 19.500L22 42L46 42Z" fill="#4aa052" /><path d="M34 20H59.300Q63 28 62 38L46 42Z" fill="#f8c540" /><circle cx="34" cy="34" r="14" fill="#fff" /><circle cx="34" cy="34" r="11.500" fill="#3e78ea" /></V> },
  { k: 'java', gap: true, running: true, el: <V><rect x="0.500" y="-1" width="67" height="70" fill="#f4f4f4" stroke="#54779a" strokeWidth="1.500" /><path d="M39 7C43 18 27 22 30 30Q31 34 35 37C31 30 33 26 38 22C44 17 42 12 39 7ZM42 19C34 24 34 28 37 32Q38 36 36 38C42 34 41 30 39 27Q38 24 42 19Z" fill="#ec9430" /><path d="M23 36C14 39 26 41 47 38M20 40C26 43 40 43 46 41M47 36C56 34 56 43 45 46M24 46C22 48 34 50 43 47M25 51C25 54 36 54 42 52M20 53C8 57 24 60 36 60S54 57 48 54M18 59C24 64 44 64 54 59" fill="none" stroke="#5a82a6" strokeWidth="2.400" strokeLinecap="round" /></V> },
  { k: 'github', running: true, el: <div className="flex h-[68px] w-[68px] items-center justify-center rounded-[16px] bg-linear-to-b from-[#8a3aaa] to-[#562a86]"><FaGithub className="h-[58px] w-[58px] text-[#f4f2f8]" /></div> },
];
const Item = ({ it }: { it: DockItem }) => (
  <div className={`relative flex h-full w-[88px] shrink-0 flex-col items-center pt-[15px] ${it.gap ? 'ml-[2px]' : ''}`}>
    <div className="flex h-[68px] items-center">{it.el}</div>
    {it.running && <span className="mt-[10px] h-2 w-2 rounded-full bg-[#a0a6b0]" />}
    {it.badge && <span className="absolute top-[7px] right-0 flex h-8 w-8 items-center justify-center rounded-full bg-[#e0483c] text-[20px] tracking-[-1px] text-white">{it.badge}</span>}
  </div>
);

function Dock() {
  return (
    <div className="absolute top-[1683px] left-[71px] flex h-[107px] w-[2738px] rounded-[40px] border-2 border-[#454c57] bg-[#19202c] pl-[3px]" style={{ fontFamily: 'Inter, sans-serif' }}>
      <svg width="0" height="0" className="absolute"><defs>{grads.map(([id, a, b]) => <linearGradient key={id} id={id} x1="0" y1="0" x2="0" y2="1"><stop offset="0" stopColor={a} /><stop offset="1" stopColor={b} /></linearGradient>)}</defs></svg>
      {left.map((it) => <Item key={it.k} it={it} />)}
      <div className="mt-[13px] ml-[19px] h-[78px] w-[2px] bg-[#4a525e]" />
      <div className="w-[19px] shrink-0" />
      {right.map((it) => <Item key={it.k} it={it} />)}
      <div className="mt-[13px] ml-[19px] h-[78px] w-[2px] bg-[#4a525e]" />
      <div className="ml-[32px] pt-[9px]">
        <svg width="60" height="78" viewBox="0 0 64 78" preserveAspectRatio="none">
          <path d="M3 10L10 70Q32 82 54 70L61 10Z" fill="url(#gTrash)" />
          <path d="M18 14L14 72M32 18V76M46 14L50 72" stroke="#a0a6a8" strokeWidth="2" opacity="0.400" />
          <ellipse cx="32" cy="11" rx="29" ry="8" fill="#4c5254" stroke="#b8bcbe" strokeWidth="1.500" />
          <path d="M8 9L16 2L22 6L28 0L34 5L42 1L46 7L54 6L56 14L44 17L34 15L22 18L10 15Z" fill="#e6e8ea" /><path d="M22 6L28 14L34 5M42 1L40 14M16 2L15 13" stroke="#8a9094" strokeWidth="1.500" fill="none" /><path d="M24 8l5 3-3 4zM38 8l5 1-3 5z" fill="#3aa0c0" />
        </svg>
      </div>
    </div>
  );
}

const menus: [string, string][] = [
  ['File', 'w-[70px]'], ['Edit', 'w-[74px]'], ['View', 'w-[81px]'], ['Simulation', 'w-[158px]'],
  ['Analysis', 'w-[131px]'], ['Components', 'w-[186px]'], ['Windows', 'w-[139px]'], ['Help', 'w-[80px]'],
];

export default function App() {
  return (
    <div className="relative h-[1800px] w-[2880px] overflow-hidden bg-[#060f1e]">
      <MenuBar />
      <div className="h-[14px] bg-linear-to-r from-[#2a3d63] via-[#182a50] to-[#081530]" />
      <div className="h-10 bg-linear-to-r from-[#1c3158] to-[#081530]" />
      <main className="-mt-10 flex h-[1628px] flex-col overflow-hidden rounded-[20px] bg-[#eeeeee]" style={{ fontFamily: '"Noto Sans", sans-serif' }}>
        <div className="relative flex h-[57px] shrink-0 items-center border-b-2 border-[#d6d6d6] bg-[#f0f1f3] pl-4">
          <span className="h-6 w-6 rounded-full border border-[#d8584c] bg-[#ed6a5e]" />
          <span className="ml-4 h-6 w-6 rounded-full border border-[#dba33e] bg-[#f5bf4f]" />
          <span className="ml-4 h-6 w-6 rounded-full border border-[#54ad40] bg-[#61c454]" />
          <span className="-mt-[2px] ml-[635px] text-[26px] font-bold tracking-[0.09px] whitespace-nowrap text-[#4a4a4c]" style={{ fontFamily: 'Inter, sans-serif' }}>
            */Users/pedropaiva/Documents/CIS/Winter_2025/CIS310/AssignmentThree/intr-mem-module.dig - Digital
          </span>
        </div>
        <div className="flex h-[133px] shrink-0 flex-col bg-linear-to-b from-white to-[#dadada]">
          <nav className="flex h-[41px] items-center pb-[4px] pl-[12px] text-[24px] font-bold tracking-[0.1px] text-[#2e2e2e]">
            {menus.map(([m, w]) => <span key={m} className={`${w} shrink-0`}>{m}</span>)}
          </nav>
          <Toolbar />
        </div>
        <div className="h-[6px] shrink-0 border-b-[3px] border-[#c8c8c8] bg-[#eeeeee]" />
        <div className="flex h-[1367px] shrink-0">
          <div className="h-full w-[2846px] shrink-0 overflow-hidden bg-white"><Circuit /></div>
          <div className="flex h-full w-[32px] flex-col">
            <div className={sbBtn}><Arrow d="M8 3L15 12H1Z" /></div>
            <div className="h-[58px] border-x-2 border-[#7a8a99] bg-[#eeeeee] shadow-[inset_3px_0_0_#b8cfe5]" />
            <div className="flex h-[1190px] flex-col items-center justify-center gap-[2px] border-2 border-[#6382bf] bg-linear-to-r from-[#dde6ee] via-[#f4f7fb] via-30% to-[#b8cce0]">
              <span className="h-[2px] w-4 bg-[#6382bf]" /><span className="h-[2px] w-4 bg-[#6382bf]" /><span className="h-[2px] w-4 bg-[#6382bf]" />
            </div>
            <div className="grow border-x-2 border-[#7a8a99] bg-[#eeeeee] shadow-[inset_3px_0_0_#b8cfe5]" />
            <div className={sbBtn}><Arrow d="M8 13L15 4H1Z" /></div>
          </div>
        </div>
        <div className="flex h-[34px] w-[2880px] shrink-0">
          <div className={sbBtn}><Arrow d="M4 8L12 1V15Z" /></div>
          <div className="w-[165px] border-y-2 border-[#7a8a99] bg-[#e8e8e8] shadow-[inset_2px_2px_0_#b8cfe5]" />
          <div className="flex w-[2457px] items-center justify-center gap-[2px] border-2 border-[#5f7fbe] bg-linear-to-b from-[#cddbe9] via-[#f4f7fa] via-30% to-[#adc3da]">
            <span className="h-[18px] w-[2px] bg-[#5f7fbe]" /><span className="h-[18px] w-[2px] bg-[#5f7fbe]" /><span className="h-[18px] w-[2px] bg-[#5f7fbe]" />
          </div>
          <div className="grow border-y-2 border-[#7a8a99] bg-[#e8e8e8] shadow-[inset_2px_2px_0_#b8cfe5]" />
          <div className={sbBtn}><Arrow d="M12 8L4 1V15Z" /></div>
        </div>
        <div className="flex grow items-start bg-linear-to-b from-[#dddddd] to-[#d0d0d0] pl-[16px]">
          <span className="text-[24.5px] leading-[30px] font-bold text-[#2e2e2e]">170 nodes</span>
        </div>
      </main>
      <Dock />
    </div>
  );
}
